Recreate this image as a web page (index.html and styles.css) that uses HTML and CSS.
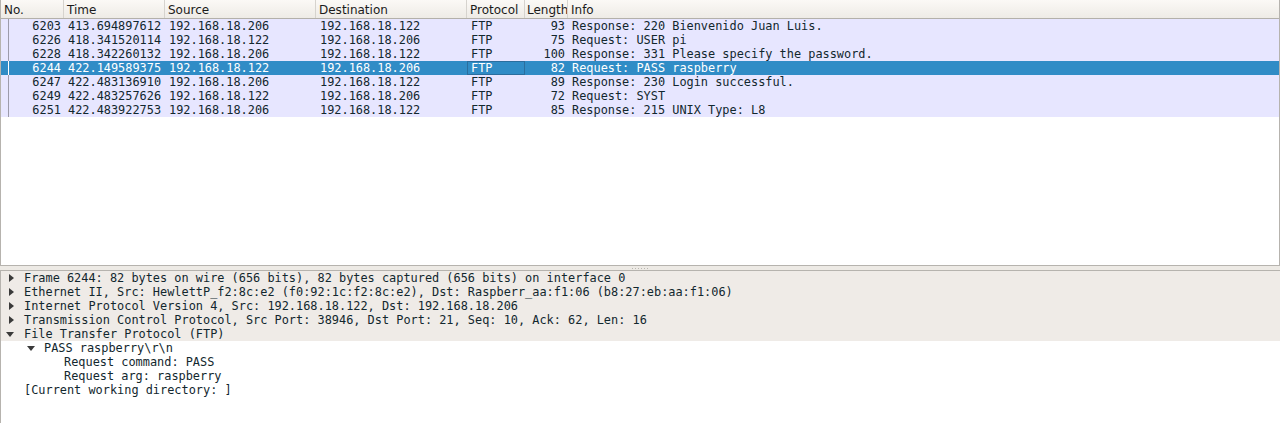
FILE: index.html
```html
<!DOCTYPE html>
<html>
<head>
<meta charset="utf-8">
<link rel="stylesheet" href="styles.css">
</head>
<body>
<div class="app">
  <section class="plist">
    <div class="hdr">
      <div class="hc">No.</div>
      <div class="hc">Time</div>
      <div class="hc">Source</div>
      <div class="hc">Destination</div>
      <div class="hc">Protocol</div>
      <div class="hc clip">Length</div>
      <div class="hc last">Info</div>
    </div>
    <div class="rows">
      <div class="row"><span class="c num tree">6203</span><span class="c">413.694897612</span><span class="c">192.168.18.206</span><span class="c">192.168.18.122</span><span class="c">FTP</span><span class="c num">93</span><span class="c">Response: 220 Bienvenido Juan Luis.</span></div>
      <div class="row"><span class="c num tree">6226</span><span class="c">418.341520114</span><span class="c">192.168.18.122</span><span class="c">192.168.18.206</span><span class="c">FTP</span><span class="c num">75</span><span class="c">Request: USER pi</span></div>
      <div class="row"><span class="c num tree">6228</span><span class="c">418.342260132</span><span class="c">192.168.18.206</span><span class="c">192.168.18.122</span><span class="c">FTP</span><span class="c num">100</span><span class="c">Response: 331 Please specify the password.</span></div>
      <div class="row sel"><span class="c num tree">6244</span><span class="c">422.149589375</span><span class="c">192.168.18.122</span><span class="c">192.168.18.206</span><span class="c focus">FTP</span><span class="c num">82</span><span class="c">Request: PASS raspberry</span></div>
      <div class="row"><span class="c num tree">6247</span><span class="c">422.483136910</span><span class="c">192.168.18.206</span><span class="c">192.168.18.122</span><span class="c">FTP</span><span class="c num">89</span><span class="c">Response: 230 Login successful.</span></div>
      <div class="row"><span class="c num tree">6249</span><span class="c">422.483257626</span><span class="c">192.168.18.122</span><span class="c">192.168.18.206</span><span class="c">FTP</span><span class="c num">72</span><span class="c">Request: SYST</span></div>
      <div class="row"><span class="c num tree">6251</span><span class="c">422.483922753</span><span class="c">192.168.18.206</span><span class="c">192.168.18.122</span><span class="c">FTP</span><span class="c num">85</span><span class="c">Response: 215 UNIX Type: L8</span></div>
    </div>
  </section>
  <div class="splitter"><span class="grip"></span></div>
  <section class="details">
    <div class="drow top"><span class="arrow right"></span><span>Frame 6244: 82 bytes on wire (656 bits), 82 bytes captured (656 bits) on interface 0</span></div>
    <div class="drow top"><span class="arrow right"></span><span>Ethernet II, Src: HewlettP_f2:8c:e2 (f0:92:1c:f2:8c:e2), Dst: Raspberr_aa:f1:06 (b8:27:eb:aa:f1:06)</span></div>
    <div class="drow top"><span class="arrow right"></span><span>Internet Protocol Version 4, Src: 192.168.18.122, Dst: 192.168.18.206</span></div>
    <div class="drow top"><span class="arrow right"></span><span>Transmission Control Protocol, Src Port: 38946, Dst Port: 21, Seq: 10, Ack: 62, Len: 16</span></div>
    <div class="drow top"><span class="arrow down"></span><span>File Transfer Protocol (FTP)</span></div>
    <div class="drow l1"><span class="arrow down"></span><span>PASS raspberry\r\n</span></div>
    <div class="drow l2"><span>Request command: PASS</span></div>
    <div class="drow l2"><span>Request arg: raspberry</span></div>
    <div class="drow l0"><span>[Current working directory: ]</span></div>
  </section>
</div>
</body>
</html>
```
FILE: styles.css
```css
* { box-sizing: border-box; }
html, body { margin: 0; padding: 0; }
body {
  width: 1280px;
  height: 423px;
  overflow: hidden;
  background: #edeae5;
  color: #12272e;
}
.app {
  display: flex;
  flex-direction: column;
  height: 423px;
}
.plist {
  height: 266px;
  background: #ffffff;
  border-left: 1px solid #b6b3ae;
  border-right: 1px solid #b6b3ae;
  border-bottom: 1px solid #b6b3ae;
  display: flex;
  flex-direction: column;
}
.hdr {
  display: grid;
  grid-template-columns: 63px 101px 151px 151px 58px 43px 1fr;
  height: 19px;
  background: linear-gradient(#fbf9f6, #eeebe6);
  border-bottom: 1px solid #b3b0aa;
  font-family: "DejaVu Sans", sans-serif;
  font-size: 12px;
  color: #1b1b1b;
}
.hc {
  padding-left: 3px;
  padding-top: 2px;
  line-height: 16px;
  border-right: 1px solid #d6d3ce;
  white-space: nowrap;
  overflow: hidden;
}
.hc.last { border-right: none; }
.hc.clip { padding-left: 2px; }
.rows {
  font-family: "DejaVu Sans Mono", monospace;
  font-size: 11.9px;
}
.row {
  display: grid;
  grid-template-columns: 63px 101px 151px 151px 58px 43px 1fr;
  height: 14px;
  background: #e7e6ff;
  color: #12272e;
  overflow: hidden;
}
.row.sel {
  background: #308cc6;
  color: #ffffff;
}
.c {
  padding-left: 4px;
  padding-top: 1px;
  line-height: 13px;
  height: 14px;
  white-space: nowrap;
  overflow: hidden;
}
.c.num {
  text-align: right;
  padding-left: 0;
  padding-right: 3px;
}
.c.tree {
  position: relative;
}
.c.tree::before {
  content: "";
  position: absolute;
  left: 7px;
  top: 0;
  bottom: 0;
  width: 1px;
  background: #9c9bab;
}
.row.sel .c.tree::before { background: #ffffff; }
.c.focus {
  box-shadow: inset 0 0 0 1px #2a6e9e;
}
.splitter {
  height: 4px;
  display: flex;
  justify-content: center;
  align-items: center;
}
.grip {
  width: 16px;
  height: 1px;
  background-image: linear-gradient(90deg, #b9b6b0 50%, transparent 50%);
  background-size: 3px 1px;
}
.details {
  flex: 1;
  background: #ffffff;
  border-top: 1px solid #b6b3ae;
  border-left: 1px solid #b6b3ae;
  font-family: "DejaVu Sans Mono", monospace;
  font-size: 11.9px;
  color: #12272e;
}
.drow {
  display: flex;
  align-items: center;
  height: 14px;
  line-height: 14px;
  white-space: nowrap;
}
.drow.top { background: #efebe7; padding-left: 23px; position: relative; }
.drow.l0 { padding-left: 23px; }
.drow.l1 { padding-left: 43px; position: relative; }
.drow.l2 { padding-left: 63px; }
.arrow {
  position: absolute;
  width: 0;
  height: 0;
}
.arrow.right {
  top: 3px;
  left: 8px;
  border-top: 4px solid transparent;
  border-bottom: 4px solid transparent;
  border-left: 5px solid #3a3a3a;
}
.arrow.down {
  top: 5px;
  border-left: 4px solid transparent;
  border-right: 4px solid transparent;
  border-top: 5px solid #3a3a3a;
}
.drow.top .arrow.down { left: 5px; }
.drow.l1 .arrow.down { left: 26px; }
```
